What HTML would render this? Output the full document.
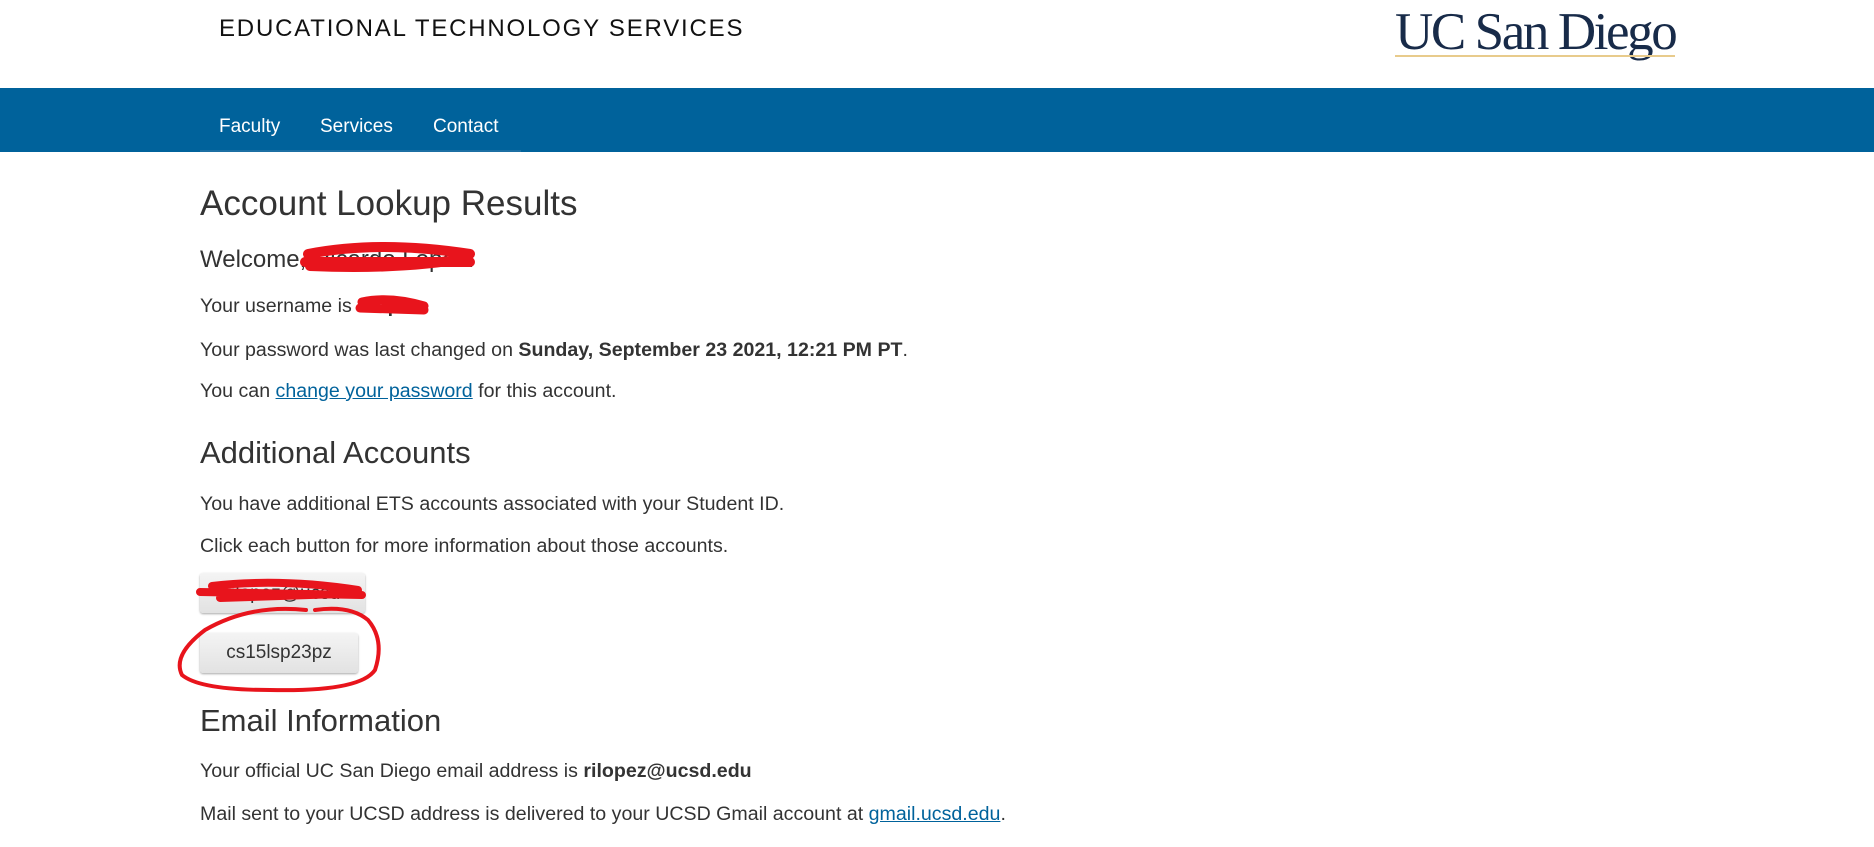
<!DOCTYPE html>
<html><head><meta charset="utf-8"><style>
html,body{margin:0;padding:0;background:#fff;width:1874px;height:847px;overflow:hidden;position:relative;font-family:"Liberation Sans",Arial,sans-serif;color:#333}
.a{position:absolute;white-space:nowrap}
.nav{position:absolute;left:0;top:88px;width:1874px;height:64px;background:#00629b}
.nav span{position:absolute;top:28px;color:#fff;font-size:19px}
p{margin:0}
.t{font-size:19.6px;line-height:22px}
a{color:#00629b;text-decoration:underline}
.btn{position:absolute;left:200px;background:linear-gradient(#f4f4f4,#e2e2e2);border-radius:3px;box-shadow:0 1px 2px rgba(0,0,0,.35);font-size:19px;color:#333;text-align:center}
</style></head><body>
<div class="a" style="left:219px;top:15px;font-size:24px;letter-spacing:1.8px;color:#111">EDUCATIONAL TECHNOLOGY SERVICES</div>
<div class="a" style="left:1395px;top:2px;font-family:'Liberation Serif',serif;font-size:53px;color:#182b49;letter-spacing:-2.4px">UC San Diego</div>
<div class="a" style="left:1395px;top:55px;width:280px;height:2px;background:#e8cb8c"></div>
<div class="nav"><span style="left:219px">Faculty</span><span style="left:320px">Services</span><span style="left:433px">Contact</span></div>
<div class="a" style="left:200px;top:150px;width:321px;height:2px;background:#1c6fa3"></div>
<div class="a" style="left:200px;top:184px;font-size:35px">Account Lookup Results</div>
<div class="a" style="left:200px;top:246px;font-size:24px">Welcome, Ricardo Lopez.</div>
<div class="a t" style="left:200px;top:295px">Your username is <b>rilopez</b>.</div>
<div class="a t" style="left:200px;top:339px">Your password was last changed on <b>Sunday, September 23 2021, 12:21 PM PT</b>.</div>
<div class="a t" style="left:200px;top:380px">You can <a>change your password</a> for this account.</div>
<div class="a" style="left:200px;top:435px;font-size:31px">Additional Accounts</div>
<div class="a t" style="left:200px;top:493px">You have additional ETS accounts associated with your Student ID.</div>
<div class="a t" style="left:200px;top:535px">Click each button for more information about those accounts.</div>
<div class="btn" style="top:573px;width:165px;height:40px;line-height:42px">rilopez@ucsd</div>
<div class="btn" style="top:633px;width:158px;height:40px;line-height:40px">cs15lsp23pz</div>
<div class="a" style="left:200px;top:703px;font-size:31px">Email Information</div>
<div class="a t" style="left:200px;top:760px">Your official UC San Diego email address is <b>rilopez@ucsd.edu</b></div>
<div class="a t" style="left:200px;top:803px">Mail sent to your UCSD address is delivered to your UCSD Gmail account at <a>gmail.ucsd.edu</a>.</div>
<svg class="a" style="left:0;top:0" width="1874" height="847">
<g stroke="#e8141c" fill="none" stroke-linecap="round">
<path d="M308 254 Q380 240 470 254 M305 262 L470 262 M310 266 Q400 270 468 258" stroke-width="10"/>
<path d="M362 302 Q390 296 424 306 M360 308 L424 310" stroke-width="9"/>
<path d="M212 586 Q280 578 358 590 M200 592 L362 595 M220 598 L340 594" stroke-width="8"/>
<path d="M306 610 Q250 604 205 630 Q172 655 182 675 Q200 690 270 690 Q360 692 375 670 Q385 640 368 620 Q350 605 315 610" stroke-width="4"/>
</g></svg>
</body></html>
